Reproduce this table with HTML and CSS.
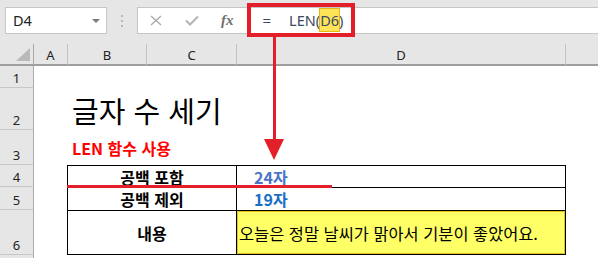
FILE: index.html
```html
<!DOCTYPE html>
<html lang="ko">
<head>
<meta charset="utf-8">
<link rel="stylesheet" href="styles.css">
</head>
<body>
<div class="app">
  <div class="toolbar">
    <div class="namebox">
      <span class="name">D4</span>
      <svg class="caret" width="8" height="4" viewBox="0 0 8 4"><path d="M0 0 H8 L4 4 Z" fill="#7a7a7a"/></svg>
    </div>
    <svg class="grip" width="3" height="12" viewBox="0 0 3 12"><rect x="0" y="0" width="2" height="2" fill="#b8b8b8"/><rect x="0" y="5" width="2" height="2" fill="#b8b8b8"/><rect x="0" y="10" width="2" height="2" fill="#b8b8b8"/></svg>
    <div class="fbar">
      <svg class="ico-x" width="12" height="11" viewBox="0 0 12 11"><path d="M1 1 L11 10 M11 1 L1 10" stroke="#a9a9a9" stroke-width="1.3" fill="none"/></svg>
      <svg class="ico-check" width="14" height="11" viewBox="0 0 14 11"><path d="M1 5.5 L5 9.5 L13 1.5" stroke="#b3b3b3" stroke-width="2" fill="none"/></svg>
      <span class="fx">fx</span>
      <span class="eq">=</span>
      <span class="formula">LEN(<span class="ref">D6</span>)</span>
    </div>
  </div>

  <div class="sheet">
    <div class="corner"><svg width="14" height="13" viewBox="0 0 14 13"><path d="M14 0 V13 H0 Z" fill="#b9b9b9"/></svg></div>
    <div class="colhead">A</div>
    <div class="colhead">B</div>
    <div class="colhead">C</div>
    <div class="colhead">D</div>
    <div class="colhead last"></div>

    <div class="rowhead r1">1</div>
    <div class="rowhead r2">2</div>
    <div class="rowhead r3">3</div>
    <div class="rowhead r4">4</div>
    <div class="rowhead r5">5</div>
    <div class="rowhead r6">6</div>
    <div class="rowhead r7"></div>

    <div class="title">글자 수 세기</div>
    <div class="subtitle">LEN 함수 사용</div>

    <div class="table">
      <div class="cell label">공백 포함</div>
      <div class="cell num n24">24자</div>
      <div class="cell label">공백 제외</div>
      <div class="cell num n19">19자</div>
      <div class="cell label tall">내용</div>
      <div class="cell content">오늘은 정말 날씨가 맑아서 기분이 좋았어요.</div>
    </div>
  </div>

  <div class="mark-box"></div>
  <div class="mark-arrow">
    <div class="shaft"></div>
    <svg class="head" width="20" height="21" viewBox="0 0 20 21"><path d="M0 0 H20 L10 21 Z" fill="#e3202a"/></svg>
  </div>
  <div class="mark-line"></div>
</div>
</body>
</html>
```

FILE: styles.css
```css
html, body {
  margin: 0;
  padding: 0;
}
body {
  width: 598px;
  height: 258px;
  overflow: hidden;
  background: #e6e6e6;
  font-family: "Noto Sans CJK KR", "Noto Sans", sans-serif;
}
.app {
  position: relative;
  width: 598px;
  height: 258px;
}

/* toolbar */
.toolbar {
  display: flex;
  align-items: center;
  height: 44px;
  box-sizing: border-box;
  padding: 7px 0 10px 5px;
}
.namebox {
  width: 102px;
  height: 27px;
  box-sizing: border-box;
  border: 1px solid #c6c6c6;
  background: #fff;
  display: flex;
  align-items: center;
  justify-content: space-between;
  padding: 0 6px 0 7px;
}
.name {
  font-family: "Noto Sans", sans-serif;
  font-size: 14.5px;
  color: #222;
  line-height: 1;
}
.grip {
  margin-left: 14px;
}
.fbar {
  margin-left: 13px;
  flex: 1;
  height: 27px;
  box-sizing: border-box;
  border: 1px solid #c6c6c6;
  border-right: none;
  background: #fff;
  display: flex;
  align-items: center;
}
.ico-x {
  margin-left: 12px;
}
.ico-check {
  margin-left: 23px;
}
.fx {
  margin-left: 22px;
  font-family: "Liberation Serif", serif;
  font-style: italic;
  font-weight: bold;
  font-size: 15px;
  color: #707070;
  line-height: 1;
}
.eq {
  margin-left: 29px;
  font-family: "Noto Sans", sans-serif;
  font-size: 15px;
  color: #3b4a60;
  line-height: 1;
}
.formula {
  margin-left: 18px;
  font-family: "Noto Sans", sans-serif;
  font-size: 14.5px;
  color: #3b4a60;
  line-height: 1;
}
.ref {
  background: #ffe45a;
  box-shadow: 0 0 0 1px #e7b814;
  padding: 1px 0;
}

/* sheet */
.sheet {
  display: grid;
  grid-template-columns: 34px 34px 79px 90px 329px 1fr;
  grid-template-rows: 22px 22px 42px 35px 22px 23px 45px 1fr;
  height: 214px;
  background: #fff;
}
.corner {
  background: #e6e6e6;
  border-right: 1px solid #ababab;
  border-bottom: 2px solid #9e9e9e;
  display: flex;
  align-items: flex-end;
  justify-content: flex-end;
  padding: 0 3px 3px 0;
}
.colhead {
  background: #e6e6e6;
  border-right: 1px solid #c3c3c3;
  border-bottom: 2px solid #9e9e9e;
  display: flex;
  align-items: center;
  justify-content: center;
  font-family: "Noto Sans", sans-serif;
  font-size: 13px;
  color: #222;
  line-height: 1;
  padding-top: 2px;
}
.colhead.last {
  border-right: none;
}
.rowhead {
  grid-column: 1;
  background: #e6e6e6;
  border-right: 1px solid #ababab;
  border-bottom: 1px solid #c6c6c6;
  display: flex;
  align-items: flex-end;
  justify-content: center;
  font-family: "Noto Sans", sans-serif;
  font-size: 13px;
  color: #222;
  line-height: 16px;
  padding-bottom: 1px;
}
.r1 { grid-row: 2; }
.r2 { grid-row: 3; }
.r3 { grid-row: 4; }
.r4 { grid-row: 5; }
.r5 { grid-row: 6; }
.r6 { grid-row: 7; }
.r7 { grid-row: 8; border-bottom: none; }

.title {
  grid-column: 3 / span 3;
  grid-row: 3;
  display: flex;
  align-items: flex-end;
  padding-left: 4px;
  padding-bottom: 5px;
  font-size: 29px;
  line-height: 29px;
  color: #000;
}
.subtitle {
  grid-column: 3 / span 3;
  grid-row: 4;
  display: flex;
  align-items: flex-end;
  padding-left: 4px;
  padding-bottom: 8px;
  font-size: 16px;
  line-height: 18px;
  font-weight: bold;
  color: #ff0000;
}

.table {
  grid-column: 3 / span 3;
  grid-row: 5 / span 3;
  margin-left: -1px;
  display: grid;
  grid-template-columns: 168px 1fr;
  grid-template-rows: 21px 22px 1fr;
  gap: 1px;
  padding: 1px;
  background: #000;
}
.cell {
  background: #fff;
  display: flex;
  align-items: center;
  font-size: 16px;
  line-height: 18px;
}
.label {
  justify-content: center;
  font-weight: bold;
  color: #000;
}
.num {
  padding-left: 17px;
  font-weight: bold;
}
.n24 { color: #4a74c6; }
.n19 { color: #1a6ec4; }
.content {
  background: #ffff66;
  box-shadow: inset 0 0 0 1px #e3c11a;
  padding-left: 2px;
  font-size: 16.4px;
  color: #000;
}

/* annotations */
.mark-box {
  position: absolute;
  left: 247px;
  top: 3px;
  width: 108px;
  height: 34px;
  box-sizing: border-box;
  border: 4px solid #e3202a;
}
.mark-arrow {
  position: absolute;
  left: 264px;
  top: 37px;
  width: 20px;
  display: flex;
  flex-direction: column;
  align-items: center;
}
.shaft {
  width: 3px;
  height: 102px;
  background: #e3202a;
}
.head {
  display: block;
}
.mark-line {
  position: absolute;
  left: 67px;
  top: 185px;
  width: 265px;
  height: 3px;
  background: #e3202a;
}
```
